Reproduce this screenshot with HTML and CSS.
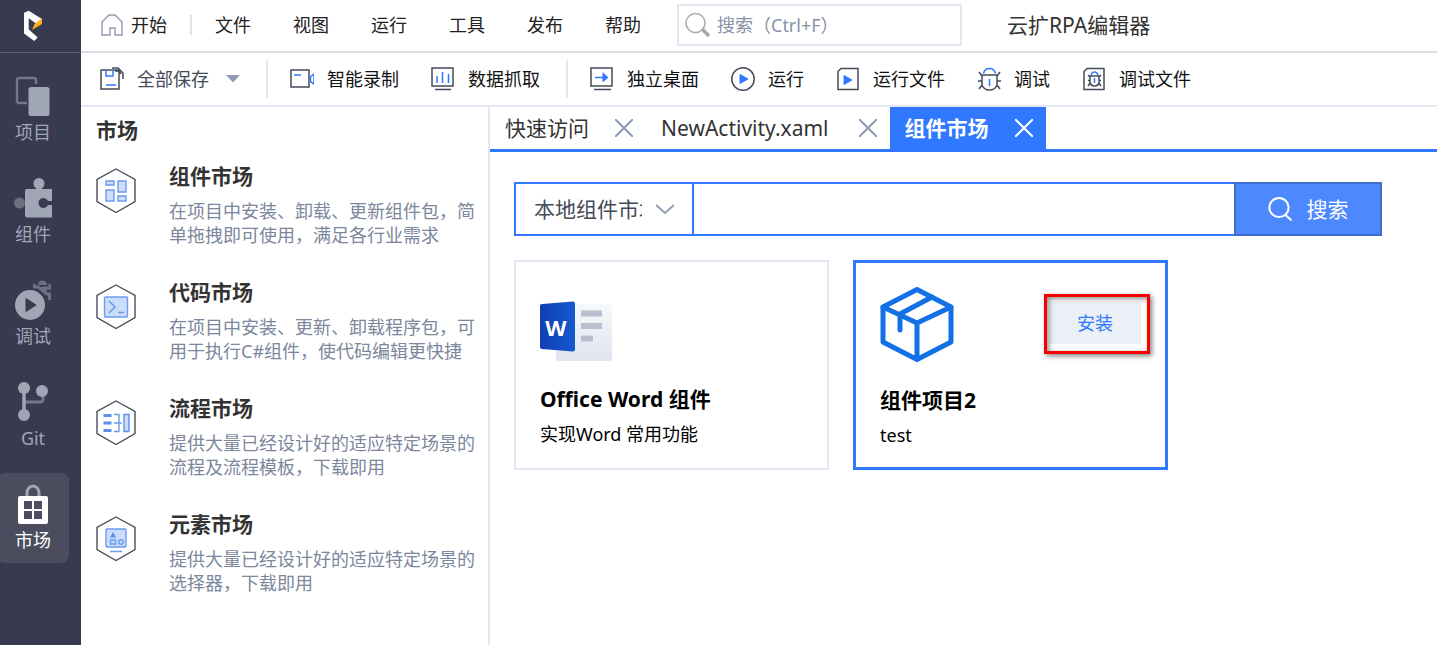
FILE: index.html
```html
<!DOCTYPE html>
<html lang="zh-CN">
<head>
<meta charset="utf-8">
<title>云扩RPA编辑器</title>
<link rel="stylesheet" href="styles.css">
</head>
<body>
<div class="app">
  <aside class="rail">
    <div class="rail-logo">
      <svg width="20" height="32" viewBox="0 0 20 32"><path d="M1 2.700L5.700.7 19 9l-6 4.500-7.300-5.200v11l9 8.200-3.400 3.500L1 23.500z" fill="#fff"/><path d="M19 8.500V14L9 20l2.500-6z" fill="#fbb01c"/></svg>
    </div>
    <nav class="rail-nav">
      <button class="rail-item" type="button">
        <svg width="36" height="44" viewBox="0 0 36 44"><path d="M12 30H4q-2 0-2-2V7q0-2 2-2h15q2 0 2 2v4" fill="none" stroke="#74788a" stroke-width="2.400"/><rect x="13.500" y="14" width="21" height="29" rx="2.500" fill="#a0a6b3"/></svg>
        <span>项目</span>
      </button>
      <button class="rail-item" type="button">
        <svg width="38" height="44" viewBox="0 0 38 44"><circle cx="5.500" cy="28" r="5.500" fill="#6c7082"/><circle cx="25" cy="8.500" r="5.500" fill="#a0a6b3"/><path d="M22 12h6v2h10v12h-4a5 5 0 1 0 0 4h4v12.500H13q-2 0-2-2V16q0-2 2-2h9z" fill="#a0a6b3"/></svg>
        <span>组件</span>
      </button>
      <button class="rail-item" type="button">
        <svg width="36" height="44" viewBox="0 0 36 44"><path d="M23 8a4.500 4.500 0 0 1 9 0z" fill="#6c7082"/><path d="M19.500 7v3h4l8 7h3v6M35 7v4h-7" fill="none" stroke="#6c7082" stroke-width="3"/><path d="M23 10h9v5l-3 1z" fill="#6c7082"/><circle cx="15" cy="28" r="15" fill="#a0a6b3"/><path d="M11 21.500v13l10-6.500z" fill="#383a4f" stroke="#383a4f" stroke-linejoin="round"/></svg>
        <span>调试</span>
      </button>
      <button class="rail-item" type="button">
        <svg width="32" height="44" viewBox="0 0 32 44"><path d="M26 13v7q0 3-3 3H8" fill="none" stroke="#74788a" stroke-width="3"/><path d="M7 10v26" stroke="#a0a6b3" stroke-width="3.500"/><circle cx="7" cy="9" r="6" fill="#a0a6b3"/><circle cx="7" cy="36" r="6" fill="#a0a6b3"/><circle cx="25" cy="12" r="6" fill="#a0a6b3"/></svg>
        <span>Git</span>
      </button>
      <button class="rail-item is-active" type="button">
        <svg width="30" height="44" viewBox="0 0 30 44"><path d="M9 17v-5a6 7 0 0 1 12 0v5" fill="none" stroke="#a0a6b3" stroke-width="3"/><rect y="15" width="30" height="28" rx="2" fill="#fff"/><path d="M6 20h8v8H6zM16 20h8v8h-8zM6 30h8v8H6zM16 30h8v8h-8z" fill="#4b4d5f"/></svg>
        <span>市场</span>
      </button>
    </nav>
  </aside>

  <div class="main">
    <header class="topbar">
      <button class="home" type="button">
        <svg width="22" height="22" viewBox="0 0 22 22"><path d="M1 8l7-7h6l7 7v13h-7v-7H9v7H1z" fill="none" stroke="#8f9ab3" stroke-width="1.400"/></svg>
        <span>开始</span>
      </button>
      <nav class="menu">
        <button type="button">文件</button>
        <button type="button">视图</button>
        <button type="button">运行</button>
        <button type="button">工具</button>
        <button type="button">发布</button>
        <button type="button">帮助</button>
      </nav>
      <label class="quick-search">
        <svg width="26" height="26" viewBox="0 0 26 26"><circle cx="10.500" cy="11" r="9.500" fill="none" stroke="#a9adb5" stroke-width="1.600"/><path d="M17 17l7 7" stroke="#a4a7ad" stroke-width="3.500"/></svg>
        <input type="text" placeholder="搜索（Ctrl+F）" aria-label="搜索">
      </label>
      <h1 class="app-title">云扩RPA编辑器</h1>
    </header>

    <div class="toolbar">
      <div class="tool-group">
        <button class="tool is-muted" type="button">
          <svg width="24" height="24" viewBox="0 0 24 24"><path d="M1 3h18v19H1zM12 1h6l5 5v6M15 4h4l2 3" fill="none" stroke="#454b5a" stroke-width="1.500"/><path d="M6 3v6h7V3M6 18h10" fill="none" stroke="#3078ff" stroke-width="1.500"/></svg>
          <span>全部保存</span>
          <svg class="caret" width="14" height="8" viewBox="0 0 14 8"><path d="M0 0h14L7 7.500z" fill="#8f9ab3"/></svg>
        </button>
      </div>
      <div class="tool-group">
        <button class="tool" type="button">
          <svg width="24" height="24" viewBox="0 0 24 24"><rect x="1" y="3" width="18" height="17" fill="none" stroke="#454b5a" stroke-width="1.500"/><path d="M4 8h7M20.500 9.500L24 7v10l-3.500-2.500z" fill="none" stroke="#3078ff" stroke-width="1.500"/></svg>
          <span>智能录制</span>
        </button>
        <button class="tool" type="button">
          <svg width="24" height="24" viewBox="0 0 24 24"><rect x="1" y="1" width="21" height="18" fill="none" stroke="#454b5a" stroke-width="1.500"/><path d="M4 22.500h16" stroke="#454b5a" stroke-width="1.500"/><path d="M6 9v7M11.500 5v11M17.500 7v9" stroke="#3078ff" stroke-width="1.500"/></svg>
          <span>数据抓取</span>
        </button>
      </div>
      <div class="tool-group">
        <button class="tool" type="button">
          <svg width="24" height="24" viewBox="0 0 24 24"><rect x="1" y="1" width="21" height="18" fill="none" stroke="#454b5a" stroke-width="1.500"/><path d="M4 22.500h17" stroke="#454b5a" stroke-width="1.500"/><path d="M5 10.500h9" stroke="#3078ff" stroke-width="1.500"/><path d="M12.500 5l6 5.500-6 5z" fill="#3078ff"/></svg>
          <span>独立桌面</span>
        </button>
        <button class="tool" type="button">
          <svg width="24" height="24" viewBox="0 0 24 24"><circle cx="12" cy="12" r="11.200" fill="none" stroke="#454b5a" stroke-width="1.500"/><path d="M9 7.500v9l8-4.500z" fill="#3078ff" stroke="#3078ff" stroke-linejoin="round"/></svg>
          <span>运行</span>
        </button>
        <button class="tool" type="button">
          <svg width="24" height="24" viewBox="0 0 24 24"><path d="M5 1.500h17v21H2v-18z" fill="none" stroke="#454b5a" stroke-width="1.500"/><path d="M8 8.500v9l8-4.500z" fill="#3078ff" stroke="#3078ff" stroke-linejoin="round"/></svg>
          <span>运行文件</span>
        </button>
        <button class="tool" type="button">
          <svg width="24" height="24" viewBox="0 0 24 24"><path d="M5 8h15v10q-2 5-7.500 5T5 18zM5 9L2 5M20 9l3-4M5 14H1M20 14h4M5 18l-3 4M20 18l3 4" fill="none" stroke="#454b5a" stroke-width="1.500"/><path d="M6.500 6.500q1-5 6-5t6 5M12.500 12v7" fill="none" stroke="#3078ff" stroke-width="1.500"/></svg>
          <span>调试</span>
        </button>
        <button class="tool" type="button">
          <svg width="24" height="24" viewBox="0 0 24 24"><path d="M5 1.500h17v21H2v-18zM8 9h9v7q-1 3-4.500 3T8 16zM8 10L6 8M17 10l2-2M8 13.500H6M17 13.500h2M8 16l-2 3M17 16l2 3" fill="none" stroke="#454b5a" stroke-width="1.500"/><path d="M9 8q1-3 3.500-3T16 8M12.500 11v5" fill="none" stroke="#3078ff" stroke-width="1.500"/></svg>
          <span>调试文件</span>
        </button>
      </div>
    </div>

    <div class="workspace">
      <section class="panel">
        <h2 class="panel-title">市场</h2>
        <ul class="market-list">
          <li class="market">
            <svg width="40" height="46" viewBox="0 0 40 46"><path d="M20 1l19 10.500v22L20 44.500l-19-11v-22z" fill="none" stroke="#4a4f5c" stroke-width="1.400"/><path d="M10 13h8v4h-8zM22 13h8v11h-8zM10 22h8v11h-8zM22 28h8v5h-8z" fill="#ccdcfb" stroke="#6e9bf0" stroke-width="1.400"/></svg>
            <div><h3>组件市场</h3><p>在项目中安装、卸载、更新组件包，简单拖拽即可使用，满足各行业需求</p></div>
          </li>
          <li class="market">
            <svg width="40" height="46" viewBox="0 0 40 46"><path d="M20 1l19 10.500v22L20 44.500l-19-11v-22z" fill="none" stroke="#4a4f5c" stroke-width="1.400"/><rect x="8.500" y="13" width="23" height="20" rx="1" fill="#ccdcfb" stroke="#6e9bf0" stroke-width="1.400"/><path d="M13 17l6 6-6 6M22 28.500h6" fill="none" stroke="#6e9bf0" stroke-width="1.600"/></svg>
            <div><h3>代码市场</h3><p>在项目中安装、更新、卸载程序包，可用于执行C#组件，使代码编辑更快捷</p></div>
          </li>
          <li class="market">
            <svg width="40" height="46" viewBox="0 0 40 46"><path d="M20 1l19 10.500v22L20 44.500l-19-11v-22z" fill="none" stroke="#4a4f5c" stroke-width="1.400"/><path d="M7.500 15.500h8M7.500 23h8M7.500 30.500h8" stroke="#5f8eec" stroke-width="3"/><path d="M18 14.500h5v17h-5M18 23h8" fill="none" stroke="#6e9bf0" stroke-width="1.400"/><path d="M28 14.500h5v17h-5z" fill="#ccdcfb" stroke="#5f8eec" stroke-width="1.400"/></svg>
            <div><h3>流程市场</h3><p>提供大量已经设计好的适应特定场景的流程及流程模板，下载即用</p></div>
          </li>
          <li class="market">
            <svg width="40" height="46" viewBox="0 0 40 46"><path d="M20 1l19 10.500v22L20 44.500l-19-11v-22z" fill="none" stroke="#4a4f5c" stroke-width="1.400"/><rect x="10" y="13" width="20" height="18" rx="1" fill="#ccdcfb" stroke="#6e9bf0" stroke-width="1.400"/><path d="M17 16l3 5.500h-6z" fill="#5f8eec"/><path d="M14.500 24h5v4h-5zM14 35.500h12" fill="none" stroke="#6e9bf0" stroke-width="1.500"/><circle cx="25" cy="26" r="2.300" fill="none" stroke="#6e9bf0" stroke-width="1.400"/></svg>
            <div><h3>元素市场</h3><p>提供大量已经设计好的适应特定场景的选择器，下载即用</p></div>
          </li>
        </ul>
      </section>

      <main class="content">
        <div class="tabs">
          <div class="tab"><span>快速访问</span><button type="button" aria-label="关闭"><svg width="18" height="18" viewBox="0 0 18 18"><path d="M0 0l18 18M18 0L0 18"/></svg></button></div>
          <div class="tab is-file"><span>NewActivity.xaml</span><button type="button" aria-label="关闭"><svg width="18" height="18" viewBox="0 0 18 18"><path d="M0 0l18 18M18 0L0 18"/></svg></button></div>
          <div class="tab is-active"><span>组件市场</span><button type="button" aria-label="关闭"><svg width="18" height="18" viewBox="0 0 18 18"><path d="M0 0l18 18M18 0L0 18"/></svg></button></div>
        </div>
        <div class="market-view">
          <form class="search-row">
            <div class="source">
              <select aria-label="市场来源"><option>本地组件市场</option></select>
              <svg width="18" height="10" viewBox="0 0 18 10"><path d="M0 1l9 8 9-8" fill="none" stroke="#8f9ab3" stroke-width="1.800"/></svg>
            </div>
            <input class="keyword" type="text" aria-label="关键字">
            <button class="search-btn" type="button">
              <svg width="26" height="26" viewBox="0 0 26 26"><circle cx="11" cy="11.500" r="9.600" fill="none" stroke="#fff" stroke-width="2"/><path d="M17 18.500l6.500 6" stroke="#fff" stroke-width="2"/></svg>
              <span>搜索</span>
            </button>
          </form>
          <div class="cards">
            <article class="card">
              <div class="card-head">
                <svg width="74" height="76" viewBox="0 0 74 76">
                  <defs>
                    <linearGradient id="page" x2="0" y2="1"><stop stop-color="#f6f8fc"/><stop offset="1" stop-color="#dfe4ee"/></linearGradient>
                    <linearGradient id="cover"><stop stop-color="#123fb0"/><stop offset="1" stop-color="#1559d2"/></linearGradient>
                  </defs>
                  <rect x="16" y="18" width="56" height="57" rx="3" fill="url(#page)"/>
                  <path d="M41 24.500h21v6H41zM41 37h21v6H41zM41 49.500h12v6H41z" fill="#b8bfcf"/>
                  <path d="M2 18l31-2.500q2 0 2 2v46q0 2-2 2L2 63q-2 0-2-2V20q0-2 2-2z" fill="url(#cover)"/>
                  <text class="word-mark" x="16" y="50" text-anchor="middle">W</text>
                </svg>
              </div>
              <h3>Office Word 组件</h3>
              <p>实现Word 常用功能</p>
            </article>
            <article class="card is-selected">
              <div class="card-head">
                <svg width="74" height="76" viewBox="0 0 74 76"><g fill="none" stroke="#1371e8" stroke-width="5" stroke-linejoin="round" stroke-linecap="round"><path d="M37 2.500l34 17.500v35L37 72.500 3 55V20z"/><path d="M3 20l34 16 34-16M37 36v36M52 10L20 27v16"/></g></svg>
                <div class="install-wrap">
                  <button class="install" type="button">安装</button>
                  <span class="highlight"></span>
                </div>
              </div>
              <h3>组件项目2</h3>
              <p>test</p>
            </article>
          </div>
        </div>
      </main>
    </div>
  </div>
</div>
</body>
</html>
```
FILE: styles.css
```css
* { box-sizing: border-box; }
body, h1, h2, h3, p, ul { margin: 0; padding: 0; }
body, button, input, select {
  font-family: "Noto Sans", "Noto Sans CJK SC", sans-serif;
  font-size: 18px;
  line-height: 24px;
}
body { background: #fff; color: #111; }
button { border: 0; padding: 0; background: none; color: inherit; white-space: nowrap; }
svg { display: block; flex: none; }
h1, h2, h3 { font-size: 21px; line-height: 26px; }

.app { display: flex; min-height: 100vh; }

.rail { flex: none; width: 81px; background: #383a4f; overflow: hidden; }
.rail-logo { display: flex; height: 53px; padding: 10px 0 0 23px; border-bottom: 1px solid #5c5e6e; }
.rail-nav { display: flex; flex-direction: column; gap: 12px; padding-top: 12px; margin-left: -3px; }
.rail-item {
  display: flex; flex-direction: column; align-items: center; gap: 3px;
  width: 72px; padding: 8px 0 11px; border-radius: 8px; color: #a0a6b3;
}
.rail-item.is-active { background: #4b4d5f; color: #fff; }

.main { display: flex; flex: 1; flex-direction: column; min-width: 0; }

.topbar { display: flex; align-items: center; height: 53px; padding: 0 20px 1px; border-bottom: 2px solid #d9dde4; }
.home { display: flex; align-items: center; gap: 8px; padding-right: 25px; position: relative; color: #222; }
.home::after { content: ""; position: absolute; right: 0; top: 2px; width: 2px; height: 20px; background: #e0e2e6; }
.menu { display: flex; gap: 42px; padding: 0 36px 0 23px; color: #222; }
.quick-search {
  display: flex; align-items: center; gap: 6px; width: 285px; height: 42px;
  margin-right: 45px; padding-left: 6px; border: 2px solid #e4e8f3;
}
.quick-search input { flex: 1; min-width: 0; border: 0; padding: 0; outline: 0; background: none; }
.quick-search input::placeholder { color: #8791a8; opacity: 1; }
.app-title { font-weight: 400; color: #333; white-space: nowrap; }

.toolbar { display: flex; align-items: center; height: 54px; padding-left: 19px; border-bottom: 2px solid #e4e8f3; }
.tool-group { display: flex; align-items: center; gap: 32px; height: 38px; }
.tool-group + .tool-group { border-left: 2px solid #e4e8f3; margin-left: 26px; padding-left: 22px; }
.tool { display: flex; align-items: center; gap: 13px; }
.tool.is-muted { color: #444a57; }
.tool .caret { margin-left: 4px; }

.workspace { display: flex; flex: 1; }

.panel { flex: none; width: 409px; padding: 10px 13px 0 15px; border-right: 2px solid #e4e8f3; color: #333; }
.market-list { display: flex; flex-direction: column; gap: 32px; padding-top: 20px; list-style: none; }
.market { display: flex; gap: 33px; }
.market > svg { margin-top: 5px; }
.market p { padding-top: 10px; color: #7c869c; }

.content { flex: 1; min-width: 0; }
.tabs { display: flex; height: 45px; border-bottom: 3px solid #3078ff; }
.tab { display: flex; align-items: center; gap: 26px; padding: 0 13px 0 15px; font-size: 21px; color: #333; white-space: nowrap; }
.tab.is-file { gap: 30px; }
.tab svg { fill: none; stroke: #8f9ab3; stroke-width: 2; }
.tab.is-active { background: #3078ff; color: #fff; font-weight: 700; }
.tab.is-active svg { stroke: #fff; }

.market-view { padding: 30px 55px 30px 24px; }
.search-row { display: flex; height: 54px; margin-bottom: 24px; }
.source { position: relative; flex: none; width: 180px; }
.source select {
  appearance: none; width: 100%; height: 100%; padding: 0 50px 0 18px;
  border: 2px solid #3078ff; border-radius: 0; background: #fff; color: #444a57; font-size: 21px;
}
.source svg { position: absolute; right: 20px; top: 22px; pointer-events: none; }
.keyword { flex: 1; min-width: 0; border: 2px solid #3078ff; border-width: 2px 0; padding: 0 12px; outline: 0; }
.search-btn {
  display: flex; align-items: center; justify-content: center; gap: 13px; width: 148px;
  border: 2px solid #3f6dcc; background: #4d88ff; color: #fff; font-size: 21px;
}

.cards { display: flex; flex-wrap: wrap; gap: 24px; }
.card { width: 315px; padding: 24px 24px 22px; border: 2px solid #e4e8f3; color: #000; }
.card.is-selected { padding-bottom: 20px; border: 3px solid #3078ff; }
.card-head { display: flex; justify-content: space-between; }
.card h3 { padding: 24px 0 10px; }
.word-mark { font: 700 22px "Noto Sans", sans-serif; fill: #fff; }
.install-wrap { position: relative; margin-top: 15px; height: 42px; }
.install { width: 92px; height: 42px; background: #ebeff6; color: #3078ff; }
.highlight {
  position: absolute; left: -5px; top: -8px; width: 106px; height: 60px;
  border: 3px solid #f80000; pointer-events: none;
  box-shadow: 2px 2px 5px rgba(0, 0, 0, .5), inset 2px 2px 5px rgba(0, 0, 0, .45);
}
```
